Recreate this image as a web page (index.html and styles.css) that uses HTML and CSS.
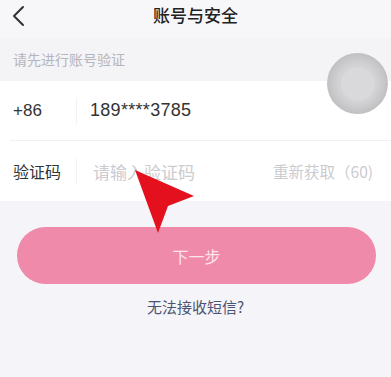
FILE: index.html
```
<!DOCTYPE html>
<html>
<head>
    <meta charset="utf-8">
    <title>账号与安全</title>
    <link rel="stylesheet" href="styles.css">
</head>
<body>
    <div class="page">
        <div class="nav-bar">
            <svg class="back" width="14" height="22" viewBox="0 0 14 22">
                <polyline points="11,2 2,11 11,20" fill="none" stroke="#333" stroke-width="2" stroke-linecap="round" stroke-linejoin="round"/>
            </svg>
            <div class="nav-title">账号与安全</div>
        </div>

        <div class="section-label">请先进行账号验证</div>

        <div class="form-card">
            <div class="form-row">
                <div class="row-label">+86</div>
                <div class="row-divider"></div>
                <div class="row-value">189****3785</div>
            </div>
            <div class="form-row">
                <div class="row-label cn">验证码</div>
                <div class="row-divider"></div>
                <input type="text" class="code-input" placeholder="请输入验证码">
                <div class="resend">重新获取（60)</div>
            </div>
        </div>

        <button class="next-button">下一步</button>
        <div class="help-link">无法接收短信?</div>

        <div class="float-ball"><div class="float-ball-inner"></div></div>

        <svg class="pointer" width="391" height="377" viewBox="0 0 391 377">
            <polygon points="135,170 194,196 168,206 158,233" fill="#e5101d"/>
        </svg>
    </div>
</body>
</html>
```

FILE: styles.css
```
body {
    margin: 0;
    background-color: #f5f4f8;
    font-family: "Liberation Sans", "Noto Sans CJK SC", sans-serif;
}
.page {
    position: relative;
    width: 391px;
    height: 377px;
    overflow: hidden;
}
.nav-bar {
    height: 38px;
    display: flex;
    align-items: center;
    justify-content: center;
    position: relative;
    background-color: #f7f6f9;
}
.back {
    position: absolute;
    left: 12px;
    top: 5px;
}
.nav-title {
    font-family: "Noto Sans CJK SC", sans-serif;
    font-size: 17px;
    font-weight: 500;
    color: #222;
    margin-top: -10px;
}
.section-label {
    height: 43px;
    line-height: 43px;
    padding-left: 13px;
    font-family: "Noto Sans CJK SC", sans-serif;
    font-size: 14px;
    color: #b5b5bb;
    background-color: #f4f3f6;
}
.form-card {
    background-color: white;
}
.form-row {
    height: 59px;
    display: flex;
    align-items: center;
    padding: 0 18px 0 13px;
}
.form-row + .form-row {
    border-top: 1px solid #f0f0f2;
    height: 60px;
    margin-left: 10px;
    padding-left: 3px;
}
.row-label {
    width: 63px;
    font-size: 17px;
    color: #333;
}
.row-label.cn {
    font-family: "Noto Sans CJK SC", sans-serif;
    font-size: 16px;
}
.row-divider {
    width: 1px;
    height: 26px;
    background-color: #f2f2f4;
}
.row-value {
    margin-left: 13px;
    font-size: 18px;
    letter-spacing: 0.3px;
    color: #333;
}
.code-input {
    flex: 1;
    min-width: 0;
    margin-left: 16px;
    padding: 0;
    border: none;
    outline: none;
    background: transparent;
    font-family: "Noto Sans CJK SC", sans-serif;
    font-size: 17px;
}
.code-input::placeholder {
    color: #cbcbd0;
}
.resend {
    font-family: "Noto Sans CJK SC", sans-serif;
    font-size: 15.5px;
    color: #cbcbd0;
}
.next-button {
    display: block;
    width: 359px;
    height: 57px;
    margin: 26px 0 0 17px;
    border: none;
    border-radius: 29px;
    background-color: #f08aab;
    color: #fde4ec;
    font-family: "Noto Sans CJK SC", sans-serif;
    font-size: 16px;
}
.help-link {
    margin-top: 12px;
    text-align: center;
    font-family: "Noto Sans CJK SC", sans-serif;
    font-size: 15px;
    line-height: 22px;
    color: #4b5572;
}
.float-ball {
    position: absolute;
    left: 327px;
    top: 53px;
    width: 61px;
    height: 61px;
    border-radius: 50%;
    background: radial-gradient(circle, #dadadc 0%, #d2d2d4 45%, #bdbdc0 75%, #b1b1b4 100%);
    display: flex;
    align-items: center;
    justify-content: center;
}
.float-ball-inner {
    width: 34px;
    height: 34px;
    border-radius: 50%;
    background-color: #d9d9db;
}
.pointer {
    position: absolute;
    left: 0;
    top: 0;
}
```
